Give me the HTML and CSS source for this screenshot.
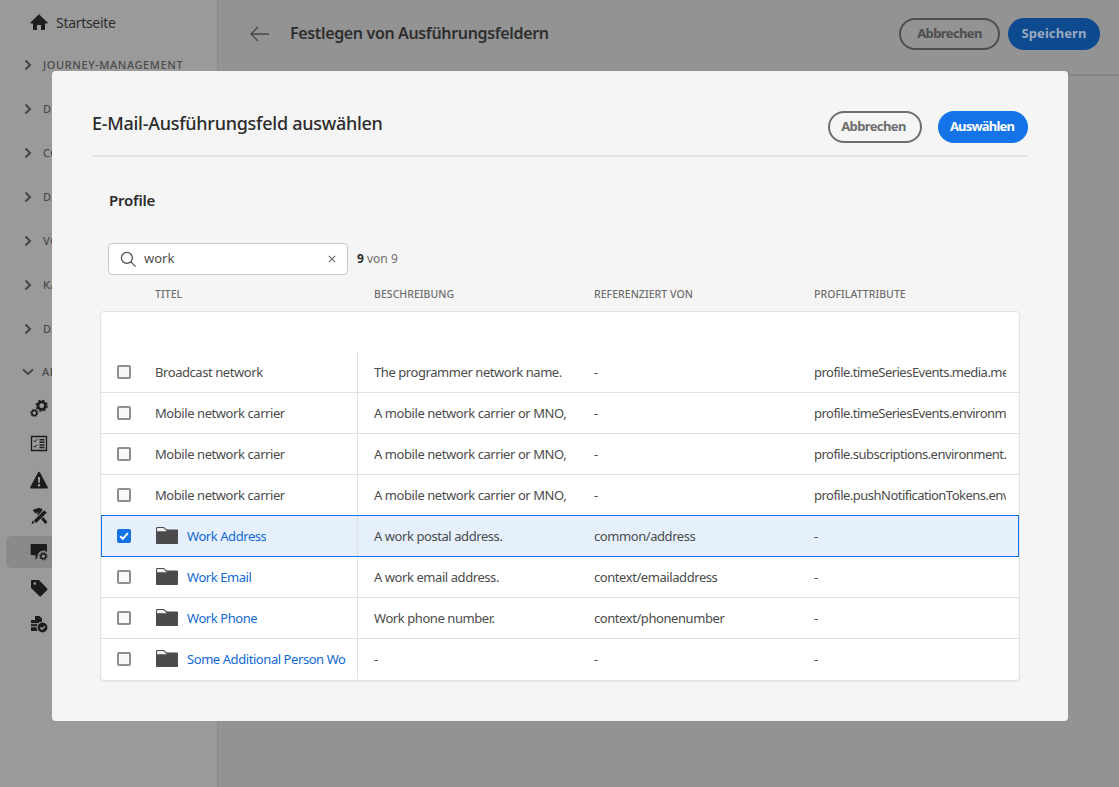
FILE: index.html
```html
<!DOCTYPE html>
<html lang="de">
<head>
<meta charset="utf-8">
<title>Festlegen von Ausführungsfeldern</title>
<link rel="stylesheet" href="styles.css">
</head>
<body>
<div class="app">
  <aside class="sidebar">
    <div class="home">
      <svg class="home-icon" viewBox="0 0 18 18"><path d="M9 1.200.4 9.600c-.3.300-.1.800.3.800H3v6.100c0 .3.200.5.500.5H7v-5h4v5h3.500c.3 0 .5-.2.5-.5v-6.100h2.300c.4 0 .6-.5.3-.8z"/></svg>
      <span>Startseite</span>
    </div>
    <div class="section"><svg class="chev" viewBox="0 0 10 12"><path d="M2.500 1.500 7 6l-4.500 4.500"/></svg><span>Journey-Management</span></div>
    <div class="section"><svg class="chev" viewBox="0 0 10 12"><path d="M2.500 1.500 7 6l-4.500 4.500"/></svg><span>Dialog</span></div>
    <div class="section"><svg class="chev" viewBox="0 0 10 12"><path d="M2.500 1.500 7 6l-4.500 4.500"/></svg><span>Content</span></div>
    <div class="section"><svg class="chev" viewBox="0 0 10 12"><path d="M2.500 1.500 7 6l-4.500 4.500"/></svg><span>Daten</span></div>
    <div class="section"><svg class="chev" viewBox="0 0 10 12"><path d="M2.500 1.500 7 6l-4.500 4.500"/></svg><span>Vorlagen</span></div>
    <div class="section"><svg class="chev" viewBox="0 0 10 12"><path d="M2.500 1.500 7 6l-4.500 4.500"/></svg><span>Kanäle</span></div>
    <div class="section"><svg class="chev" viewBox="0 0 10 12"><path d="M2.500 1.500 7 6l-4.500 4.500"/></svg><span>Datenschutz</span></div>
    <div class="section open"><svg class="chev-down" viewBox="0 0 12 10"><path d="M1 2.500 6 7l5-4.500"/></svg><span>Administration</span></div>
    <nav class="nav-icons">
      <div class="nav-item"><svg viewBox="0 0 18 18">
        <circle cx="11.700" cy="6.700" r="3.700" class="gear-ring"/><circle cx="11.700" cy="6.700" r="5.400" class="gear-teeth"/>
        <circle cx="4.300" cy="14" r="2.500" class="gear-ring-small"/><circle cx="4.300" cy="14" r="3.700" class="gear-teeth-small"/>
      </svg></div>
      <div class="nav-item"><svg viewBox="0 0 18 18"><path d="M1.500 1.500h15v14h-15z" class="line"/><path d="m3.600 5.500 1.300 1.300 2.300-2.600M3.600 11 4.900 12.300l2.300-2.600" class="thin"/><path d="M9.500 4.800h5M9.500 7.300h5M9.500 10h5M9.500 12.500h5" class="bar"/></svg></div>
      <div class="nav-item"><svg viewBox="0 0 18 18"><path fill-rule="evenodd" d="M9 .8c.4 0 .7.200.9.500l7.900 15c.3.600-.1 1.200-.8 1.200H1c-.7 0-1.100-.6-.8-1.200l7.900-15c.2-.3.500-.5.900-.5zM7.900 6l.3 6h1.600l.3-6zM9 13a1.300 1.300 0 1 0 0 2.600A1.300 1.300 0 0 0 9 13z"/></svg></div>
      <div class="nav-item"><svg viewBox="0 0 18 18"><path d="M2.500 3 9 .8l3.500 1.500-1.500 4-3-.8L5.500 6.500z"/><path d="M8 6l8.300 10" class="tool"/><path d="M15.500 4.500 4 15.500" class="tool-cut"/><path d="M15.500 4.500 5 14.800" class="tool-wide"/><path d="M2.500 13.500l2.300 2.300-3.300 1.200z"/></svg></div>
      <div class="nav-item active"><svg viewBox="0 0 18 18"><path d="M1.800 1h14c.7 0 1.200.5 1.200 1.200V11c0 .7-.5 1.200-1.200 1.200H9L5.500 17v-4.800H1.800c-.7 0-1.200-.5-1.200-1.200V2.200C.6 1.500 1.100 1 1.800 1z"/><circle cx="13.300" cy="13.300" r="5.700" class="cut-active"/><circle cx="13.300" cy="13.300" r="2.500" class="gear-ring-small"/><circle cx="13.300" cy="13.300" r="3.700" class="gear-teeth-small"/></svg></div>
      <div class="nav-item"><svg viewBox="0 0 18 18"><path fill-rule="evenodd" d="M1.500 1h7c.3 0 .5.100.7.300l8 8.200c.4.400.4 1 0 1.400l-6.300 6.300c-.4.400-1 .4-1.400 0l-8.200-8c-.2-.2-.3-.4-.3-.7v-7C1 1.200 1.200 1 1.500 1zm3.300 2.200a1.300 1.300 0 1 0 0 2.600 1.300 1.300 0 0 0 0-2.600z"/></svg></div>
      <div class="nav-item"><svg viewBox="0 0 18 18"><path d="M5 1h4.500L12 3.500V7H5z"/><path d="M1 5h8v11H1z"/><path d="M1 8.700h8M1 11.700h8" class="doc-line"/><circle cx="12.500" cy="12.500" r="6" class="cut"/><circle cx="12.500" cy="12.500" r="4.900"/><path d="m10.300 12.500 1.700 1.700 2.900-3" class="check"/></svg></div>
    </nav>
  </aside>
  <main class="content">
    <header class="topbar">
      <svg class="back" viewBox="0 0 20 16"><path d="M8 1 1 8l7 7M1 8h18"/></svg>
      <h1>Festlegen von Ausführungsfeldern</h1>
      <div class="top-actions">
        <span class="btn btn-outline-dim">Abbrechen</span>
        <span class="btn btn-primary-dim">Speichern</span>
      </div>
    </header>
  </main>
</div>

<section class="modal">
  <header class="modal-head">
    <h2>E-Mail-Ausführungsfeld auswählen</h2>
    <div class="modal-actions">
      <span class="btn btn-outline">Abbrechen</span>
      <span class="btn btn-primary">Auswählen</span>
    </div>
  </header>
  <h3 class="crumb">Profile</h3>
  <div class="search-row">
    <div class="search">
      <svg class="search-icon" viewBox="0 0 18 18"><circle cx="7.300" cy="7.300" r="5.800"/><path d="m11.500 11.500 5 5"/></svg>
      <span class="search-text">work</span>
      <svg class="clear" viewBox="0 0 8 8"><path d="m.8.800 6.400 6.400M7.200.8.800 7.200"/></svg>
    </div>
    <span class="count"><b>9</b> von 9</span>
  </div>
  <div class="col-heads">
    <span class="head-title">Titel</span>
    <span class="head-col">Beschreibung</span>
    <span class="head-col">Referenziert von</span>
    <span class="head-col">Profilattribute</span>
  </div>
  <div class="table">
    <div class="spacer"></div>
    <div class="row">
      <span class="check-cell"><span class="box"></span></span>
      <span class="cell-title"><span class="clip">Broadcast network</span></span>
      <span class="cell desc">The programmer network name.</span>
      <span class="cell ref">-</span>
      <span class="cell attr">profile.timeSeriesEvents.media.mediaReach.broadcastNetwork</span>
    </div>
    <div class="row">
      <span class="check-cell"><span class="box"></span></span>
      <span class="cell-title"><span class="clip">Mobile network carrier</span></span>
      <span class="cell desc">A mobile network carrier or MNO,</span>
      <span class="cell ref">-</span>
      <span class="cell attr">profile.timeSeriesEvents.environment.carrier</span>
    </div>
    <div class="row">
      <span class="check-cell"><span class="box"></span></span>
      <span class="cell-title"><span class="clip">Mobile network carrier</span></span>
      <span class="cell desc">A mobile network carrier or MNO,</span>
      <span class="cell ref">-</span>
      <span class="cell attr">profile.subscriptions.environment.carrier</span>
    </div>
    <div class="row">
      <span class="check-cell"><span class="box"></span></span>
      <span class="cell-title"><span class="clip">Mobile network carrier</span></span>
      <span class="cell desc">A mobile network carrier or MNO,</span>
      <span class="cell ref">-</span>
      <span class="cell attr">profile.pushNotificationTokens.environment.carrier</span>
    </div>
    <div class="row selected">
      <span class="check-cell"><span class="box checked"><svg viewBox="0 0 14 14"><path d="m3.200 7.300 2.600 2.600 5-5.800"/></svg></span></span>
      <span class="cell-title"><svg class="folder" viewBox="0 0 22 17"><path d="M0 1.500C0 .6.600 0 1.500 0h6.300l3 2.500h10.200c.6 0 1 .4 1 1V16c0 .6-.4 1-1 1H1c-.6 0-1-.4-1-1z"/><path d="M1 4.300V1.800c0-.5.300-.8.800-.8h5.700l3.300 3.300z" class="tab"/></svg><span class="clip link">Work Address</span></span>
      <span class="cell desc">A work postal address.</span>
      <span class="cell ref">common/address</span>
      <span class="cell attr">-</span>
    </div>
    <div class="row">
      <span class="check-cell"><span class="box"></span></span>
      <span class="cell-title"><svg class="folder" viewBox="0 0 22 17"><path d="M0 1.500C0 .6.600 0 1.500 0h6.300l3 2.500h10.200c.6 0 1 .4 1 1V16c0 .6-.4 1-1 1H1c-.6 0-1-.4-1-1z"/><path d="M1 4.300V1.800c0-.5.300-.8.800-.8h5.700l3.300 3.300z" class="tab"/></svg><span class="clip link">Work Email</span></span>
      <span class="cell desc">A work email address.</span>
      <span class="cell ref">context/emailaddress</span>
      <span class="cell attr">-</span>
    </div>
    <div class="row">
      <span class="check-cell"><span class="box"></span></span>
      <span class="cell-title"><svg class="folder" viewBox="0 0 22 17"><path d="M0 1.500C0 .6.600 0 1.500 0h6.300l3 2.500h10.200c.6 0 1 .4 1 1V16c0 .6-.4 1-1 1H1c-.6 0-1-.4-1-1z"/><path d="M1 4.300V1.800c0-.5.300-.8.800-.8h5.700l3.300 3.300z" class="tab"/></svg><span class="clip link">Work Phone</span></span>
      <span class="cell desc">Work phone number.</span>
      <span class="cell ref">context/phonenumber</span>
      <span class="cell attr">-</span>
    </div>
    <div class="row last">
      <span class="check-cell"><span class="box"></span></span>
      <span class="cell-title"><svg class="folder" viewBox="0 0 22 17"><path d="M0 1.500C0 .6.600 0 1.500 0h6.300l3 2.500h10.200c.6 0 1 .4 1 1V16c0 .6-.4 1-1 1H1c-.6 0-1-.4-1-1z"/><path d="M1 4.300V1.800c0-.5.300-.8.800-.8h5.700l3.300 3.300z" class="tab"/></svg><span class="clip link">Some Additional Person Work Details</span></span>
      <span class="cell desc">-</span>
      <span class="cell ref">-</span>
      <span class="cell attr">-</span>
    </div>
  </div>
</section>
</body>
</html>
```
FILE: styles.css
```css
* { box-sizing: border-box; }
html, body { margin: 0; height: 100%; overflow: hidden; }
body {
  font-family: "Noto Sans", "Open Sans", "Liberation Sans", sans-serif;
  font-size: 13px;
  color: #4b4b4b;
  background: #939393;
}
.app { display: flex; height: 787px; }

/* Sidebar */
.sidebar {
  width: 218px;
  flex: none;
  background: #9a9a9a;
  border-right: 1px solid #8c8c8c;
  padding-top: 10px;
}
.home {
  display: flex;
  align-items: center;
  gap: 8px;
  height: 24px;
  padding-left: 30px;
  font-size: 14px;
  letter-spacing: -.3px;
  color: #2c2c2c;
  margin-bottom: 9px;
}
.home-icon { width: 18px; height: 18px; fill: #1f1f1f; }
.section {
  display: flex;
  align-items: center;
  gap: 10px;
  height: 44px;
  padding-left: 23px;
  font-size: 11px;
  font-weight: 500;
  letter-spacing: .6px;
  text-transform: uppercase;
  white-space: nowrap;
  color: #4a4a4a;
}
.section span { padding-bottom: 2px; }
.chev { width: 10px; height: 12px; fill: none; stroke: #464646; stroke-width: 2; }
.chev-down { width: 12px; height: 10px; fill: none; stroke: #464646; stroke-width: 2; margin-right: -2px; margin-left: -1px; }
.section.open { height: 36px; margin-top: 3px; }
.nav-icons { display: flex; flex-direction: column; padding: 2px 6px 0; }
.nav-item {
  height: 32px;
  margin-bottom: 4px;
  border-radius: 6px;
  padding-left: 24px;
  display: flex;
  align-items: center;
}
.nav-item svg { width: 18px; height: 18px; fill: #1c1c1c; }
.nav-item.active { background: #8a8a8a; }
.nav-item .line { fill: none; stroke: #1c1c1c; stroke-width: 1.300; }
.nav-item .thin { fill: none; stroke: #1c1c1c; stroke-width: 1; }
.nav-item .bar { fill: none; stroke: #1c1c1c; stroke-width: 1.400; }
.nav-item .check { fill: none; stroke: #9a9a9a; stroke-width: 1.500; }
.nav-item .gear-ring { fill: none; stroke: #1c1c1c; stroke-width: 2.600; }
.nav-item .gear-teeth { fill: none; stroke: #1c1c1c; stroke-width: 1.400; stroke-dasharray: 2.240 2.000; }
.nav-item .gear-ring-small { fill: none; stroke: #1c1c1c; stroke-width: 1.500; }
.nav-item .gear-teeth-small { fill: none; stroke: #1c1c1c; stroke-width: 1; stroke-dasharray: 1.450 1.450; }
.nav-item .tool { fill: none; stroke: #1c1c1c; stroke-width: 2.800; }
.nav-item .tool-cut { fill: none; stroke: #9a9a9a; stroke-width: 5; }
.nav-item .tool-wide { fill: none; stroke: #1c1c1c; stroke-width: 3.400; }
.nav-item .cut { fill: #9a9a9a; }
.nav-item .cut-active { fill: #8a8a8a; }
.nav-item .doc-line { fill: none; stroke: #9a9a9a; stroke-width: 1; }

/* Page header */
.content { flex: 1; min-width: 0; }
.topbar {
  height: 76px;
  border-bottom: 2px solid #868686;
  display: flex;
  align-items: flex-start;
  padding: 18px 19px 0 32px;
}
.back { width: 20px; height: 16px; margin-top: 8px; fill: none; stroke: #4a4a4a; stroke-width: 1.400; flex: none; }
.topbar h1 {
  margin: 0 0 0 20px;
  font-size: 16px;
  line-height: 30px;
  font-weight: 600;
  letter-spacing: -.35px;
  color: #2e2e2e;
}
.top-actions { margin-left: auto; display: flex; gap: 8px; }

/* Buttons */
.btn {
  display: inline-flex;
  align-items: center;
  justify-content: center;
  height: 32px;
  border-radius: 16px;
  font-size: 13px;
  font-weight: 700;
  letter-spacing: -.6px;
  padding-bottom: 2px;
}
.btn-outline-dim { width: 101px; border: 2px solid #4e4e4e; color: #4e4e4e; }
.btn-primary-dim { width: 92px; background: #0d4a8f; color: #9aa9bd; letter-spacing: .1px; }
.btn-outline { width: 94px; border: 2px solid #6e6e6e; color: #6e6e6e; letter-spacing: -.62px; padding-right: 3px; }
.btn-primary { width: 90px; background: #1473e6; color: #fff; letter-spacing: -.8px; padding-right: 2px; }

/* Modal */
.modal {
  position: absolute;
  left: 52px;
  top: 71px;
  width: 1016px;
  height: 650px;
  background: #f5f5f5;
  border-radius: 4px;
  padding: 40px 40px 0;
}
.modal-head {
  display: flex;
  justify-content: space-between;
  align-items: flex-start;
  height: 46px;
  border-bottom: 2px solid #e3e3e3;
}
.modal-head h2 {
  margin: 0;
  font-size: 18px;
  line-height: 24px;
  font-weight: 500;
  letter-spacing: -.275px;
  color: #2c2c2c;
}
.modal-actions { display: flex; gap: 16px; }
.crumb {
  margin: 33px 0 0 17px;
  font-size: 15px;
  line-height: 20px;
  font-weight: 600;
  letter-spacing: -.2px;
  color: #2c2c2c;
}
.search-row {
  display: flex;
  align-items: center;
  gap: 9px;
  margin: 33px 0 0 16px;
}
.search {
  width: 240px;
  height: 32px;
  background: #fff;
  border: 1px solid #c8c8c8;
  border-radius: 4px;
  display: flex;
  align-items: center;
  padding: 0 11px;
}
.search-icon { width: 17px; height: 17px; fill: none; stroke: #4b4b4b; stroke-width: 1.300; flex: none; }
.search-text { margin-left: 7px; padding-bottom: 2px; font-size: 13px; color: #4b4b4b; }
.clear { width: 8px; height: 8px; margin-left: auto; fill: none; stroke: #6e6e6e; stroke-width: 1.200; }
.count { padding-bottom: 2px; font-size: 12px; color: #6e6e6e; }
.count b { color: #2c2c2c; font-weight: 700; }
.col-heads {
  display: flex;
  align-items: center;
  height: 30px;
  margin-top: 4px;
  font-size: 10.500px;
  font-weight: 500;
  letter-spacing: .05px;
  text-transform: uppercase;
  color: #6e6e6e;
}
.head-title { margin-left: 63px; width: 219px; flex: none; }
.head-col { width: 220px; flex: none; }

/* Table */
.table {
  margin: 2px 0 0 8px;
  width: 920px;
  height: 370px;
  background: #fff;
  border: 1px solid #e1e1e1;
  border-radius: 4px;
  box-shadow: 0 1px 1px rgba(0, 0, 0, .06);
}
.spacer { height: 40px; }
.row {
  display: flex;
  align-items: center;
  height: 41px;
  border-bottom: 1px solid #e1e1e1;
}
.row.last { border-bottom: 0; height: 40px; }
.row.selected {
  background: #e5f0fc;
  outline: 1px solid #1473e6;
  outline-offset: -1px;
  height: 42px;
  margin-top: -1px;
  position: relative;
  border-bottom: 0;
}
.check-cell { width: 54px; flex: none; display: flex; padding-left: 16px; }
.box {
  width: 14px;
  height: 14px;
  border: 2px solid #8e8e8e;
  border-radius: 2px;
  background: #f8f8f8;
  display: block;
}
.box.checked { background: #1473e6; border: 0; }
.box.checked svg { display: block; width: 14px; height: 14px; fill: none; stroke: #fff; stroke-width: 2; }
.cell-title {
  width: 203px;
  flex: none;
  height: 100%;
  padding-right: 11px;
  border-right: 1px solid #e1e1e1;
  display: flex;
  align-items: center;
  gap: 9px;
  min-width: 0;
}
.clip { overflow: hidden; white-space: nowrap; letter-spacing: -.43px; }
.folder { width: 22px; height: 17px; flex: none; fill: #4b4b4b; margin: -1px 0 0 1px; }
.folder .tab { fill: #f0f0f0; }
.link { color: #1269d3; }
.cell {
  display: block;
  flex: none;
  overflow: hidden;
  white-space: nowrap;
  letter-spacing: -.43px;
}
.desc { width: 193px; margin: 0 27px 0 16px; }
.ref { width: 204px; margin-right: 16px; }
.attr { width: 192px; letter-spacing: -.52px; }
```
